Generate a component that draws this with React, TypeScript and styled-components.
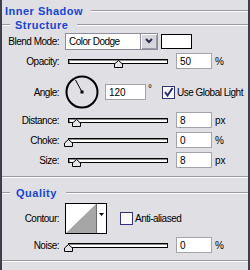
import React from "react";
import styled, { createGlobalStyle } from "styled-components";

const Global = createGlobalStyle`
  html, body { margin: 0; padding: 0; background: #e0dfe4; }
  body { font-family: "Liberation Sans", Arial, sans-serif; color: #000; }
`;

const Panel = styled.div`
  width: 250px;
  height: 270px;
  box-sizing: border-box;
  background: #e0dfe4;
  border-left: 2px solid #3f3f4c;
  border-right: 2px solid #3f3f4c;
  display: flex;
  flex-direction: column;
  overflow: hidden;
`;

const Etch = styled.div`
  flex: 1;
  height: 0;
  border-top: 1px solid #9b9aa3;
  border-bottom: 1px solid #fbfbfd;
`;

const LeadEtch = styled(Etch)`
  flex: none;
  width: 8px;
`;

const Divider = styled.div<{ $mt: number }>`
  height: 0;
  margin-top: ${(p) => p.$mt}px;
  border-top: 1px solid #9b9aa3;
  border-bottom: 1px solid #fbfbfd;
`;

const Header = styled.div<{ $h: number; $mt?: number }>`
  display: flex;
  align-items: center;
  height: ${(p) => p.$h}px;
  margin-top: ${(p) => p.$mt ?? 0}px;
`;

const Title = styled.div<{ $pl: number; $pr: number }>`
  font-size: 11px;
  font-weight: bold;
  letter-spacing: 0.5px;
  color: #1545d2;
  line-height: 12px;
  white-space: nowrap;
  padding-left: ${(p) => p.$pl}px;
  padding-right: ${(p) => p.$pr}px;
`;

const Row = styled.div<{ $h?: number; $mt?: number }>`
  display: grid;
  grid-template-columns: 57px auto;
  column-gap: 6px;
  align-items: center;
  height: ${(p) => p.$h ?? 18}px;
  margin-top: ${(p) => p.$mt ?? 2}px;
`;

const Label = styled.div`
  text-align: right;
  font-size: 10px;
  letter-spacing: -0.5px;
  white-space: nowrap;
`;

const Controls = styled.div`
  display: flex;
  align-items: center;
`;

const Track = styled.div`
  position: relative;
  width: 100px;
  height: 5px;
  box-sizing: border-box;
  margin-left: 3px;
  border: 1px solid #000;
  background: #fff;
  box-shadow: inset 1px 1px 0 #8a8a8a;
`;

const Thumb = styled.svg`
  position: absolute;
  top: 0;
  width: 9px;
  height: 8px;
  display: block;
`;

const NumBox = styled.div<{ $w?: number; $ml?: number }>`
  width: ${(p) => p.$w ?? 36}px;
  height: 16px;
  box-sizing: border-box;
  margin-left: ${(p) => p.$ml ?? 0}px;
  border: 1px solid #a3a3ab;
  background: #fff;
  font-size: 10px;
  padding-left: 3px;
  display: flex;
  align-items: center;
`;

const Unit = styled.div<{ $ml?: number; $raise?: number }>`
  margin-left: ${(p) => p.$ml ?? 3}px;
  margin-bottom: ${(p) => (p.$raise ?? 0) * 2}px;
  font-size: 10px;
`;

const Select = styled.div`
  width: 93px;
  height: 17px;
  box-sizing: border-box;
  border: 1px solid #8c8c9c;
  background: #fff;
  display: flex;
`;

const SelectText = styled.div`
  flex: 1;
  font-size: 10px;
  letter-spacing: -0.5px;
  padding-left: 3px;
  display: flex;
  align-items: center;
`;

const SelectBtn = styled.div`
  width: 16px;
  background: #d6d6de;
  border-left: 1px solid #8c8c9c;
  box-shadow: inset 1px 1px #fff, inset -1px -1px #9a9aa8;
  display: flex;
  align-items: center;
  justify-content: center;
`;

const Swatch = styled.div`
  width: 31px;
  height: 15px;
  box-sizing: border-box;
  margin-left: 3px;
  border: 1px solid #000;
  background: #fff;
`;

const Dial = styled.svg`
  width: 34px;
  height: 34px;
  display: block;
`;

const Check = styled.div<{ $ml: number }>`
  width: 13px;
  height: 13px;
  box-sizing: border-box;
  margin-left: ${(p) => p.$ml}px;
  border: 1px solid #33337a;
  background: #fafafc;
  display: flex;
  align-items: center;
  justify-content: center;
`;

const CheckText = styled.div`
  margin-left: 2px;
  font-size: 10px;
  letter-spacing: -0.5px;
  white-space: nowrap;
`;

const ContourBox = styled.div`
  width: 42px;
  height: 31px;
  box-sizing: border-box;
  border: 1px solid #000;
  background: #fff;
  display: flex;
`;

const ContourCurve = styled.svg`
  width: 30px;
  height: 29px;
  display: block;
`;

const ContourArrow = styled.div`
  flex: 1;
  border-left: 1px solid #6a6a6a;
  display: flex;
  justify-content: center;
  padding-top: 9px;
`;

function Slider({ label, pos, value, unit }: { label: string; pos: number; value: string; unit: string }) {
  return (
    <Row>
      <Label>{label}</Label>
      <Controls>
        <Track>
          <Thumb viewBox="0 0 9 8" style={{ left: `${pos - 5}px` }}>
            <polygon points="0.5,4 4.5,0.5 8.5,4 8.5,7.5 0.5,7.5" fill="#e6e6ea" stroke="#000" strokeWidth="1" />
          </Thumb>
        </Track>
        <NumBox $ml={8}>{value}</NumBox>
        <Unit>{unit}</Unit>
      </Controls>
    </Row>
  );
}

export default function App() {
  return (
    <>
      <Global />
      <Panel>
        <Header $h={22}>
          <Title $pl={3} $pr={8}>Inner Shadow</Title>
          <Etch />
        </Header>
        <Header $h={6}>
          <LeadEtch />
          <Title $pl={5} $pr={9}>Structure</Title>
          <Etch />
        </Header>

        <Row $mt={4}>
          <Label>Blend Mode:</Label>
          <Controls>
            <Select>
              <SelectText>Color Dodge</SelectText>
              <SelectBtn>
                <svg width="8" height="6" viewBox="0 0 8 6">
                  <polyline points="1,1 4,4 7,1" fill="none" stroke="#2c2c50" strokeWidth="2" />
                </svg>
              </SelectBtn>
            </Select>
            <Swatch />
          </Controls>
        </Row>
        <Slider label="Opacity:" pos={50} value="50" unit="%" />
        <Row $h={34} $mt={5}>
          <Label>Angle:</Label>
          <Controls>
            <Dial viewBox="0 0 34 34">
              <circle cx="17" cy="17" r="15.5" fill="none" stroke="#000" strokeWidth="2" />
              <line x1="17" y1="17" x2="10.5" y2="5" stroke="#000" strokeWidth="1" />
              <rect x="15.5" y="15.5" width="3" height="3" fill="#000" />
            </Dial>
            <NumBox $w={41} $ml={6}>120</NumBox>
            <Unit $ml={2} $raise={4}>°</Unit>
            <Check $ml={10}>
              <svg width="11" height="11" viewBox="0 0 11 11">
                <polyline points="2,5 4.5,8.5 9.5,1" fill="none" stroke="#2c2c78" strokeWidth="2" />
              </svg>
            </Check>
            <CheckText>Use Global Light</CheckText>
          </Controls>
        </Row>
        <Slider label="Distance:" pos={8} value="8" unit="px" />
        <Slider label="Choke:" pos={0} value="0" unit="%" />
        <Slider label="Size:" pos={8} value="8" unit="px" />

        <Divider $mt={7} />
        <Header $h={14} $mt={8}>
          <LeadEtch />
          <Title $pl={6} $pr={9}>Quality</Title>
          <Etch />
        </Header>
        <Row $h={31} $mt={3}>
          <Label>Contour:</Label>
          <Controls>
            <ContourBox>
              <ContourCurve viewBox="0 0 30 29">
                <polygon points="0,29 30,0 30,29" fill="#a6a6a6" />
              </ContourCurve>
              <ContourArrow>
                <svg width="5" height="3" viewBox="0 0 5 3">
                  <polygon points="0,0 5,0 2.5,3" fill="#000" />
                </svg>
              </ContourArrow>
            </ContourBox>
            <Check $ml={13} />
            <CheckText>Anti-aliased</CheckText>
          </Controls>
        </Row>
        <Slider label="Noise:" pos={0} value="0" unit="%" />
        <Divider $mt={6} />
      </Panel>
    </>
  );
}
